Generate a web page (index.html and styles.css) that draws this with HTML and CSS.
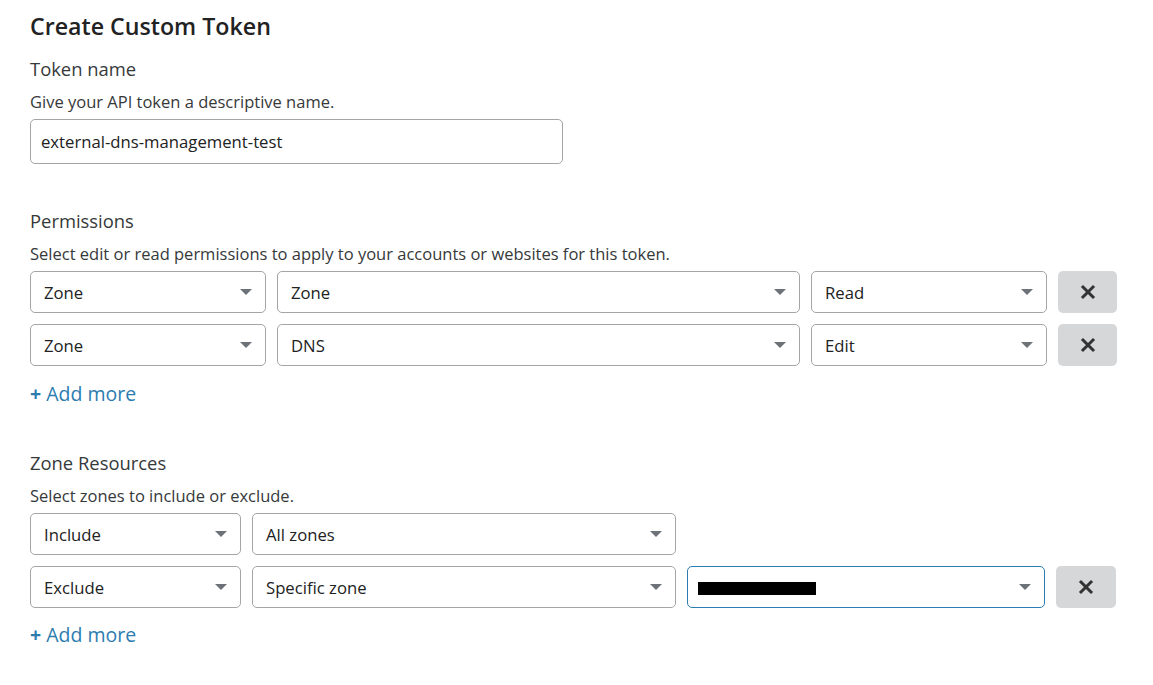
FILE: index.html
```html
<!DOCTYPE html>
<html>
<head>
<meta charset="utf-8">
<link rel="stylesheet" href="styles.css">
</head>
<body>
<div class="page">
  <h1 class="title">Create Custom Token</h1>

  <section class="sec sec-name">
    <div class="label">Token name</div>
    <div class="desc">Give your API token a descriptive name.</div>
    <div class="input">external-dns-management-test</div>
  </section>

  <section class="sec sec-perm">
    <div class="label">Permissions</div>
    <div class="desc">Select edit or read permissions to apply to your accounts or websites for this token.</div>
    <div class="rows">
      <div class="row perm-row">
        <div class="select"><span>Zone</span><i class="caret"></i></div>
        <div class="select"><span>Zone</span><i class="caret"></i></div>
        <div class="select"><span>Read</span><i class="caret"></i></div>
        <button class="remove"><svg viewBox="0 0 16 16" width="16" height="16"><path d="M3 3L13 13M13 3L3 13" stroke="#333" stroke-width="3" stroke-linecap="square"/></svg></button>
      </div>
      <div class="row perm-row">
        <div class="select"><span>Zone</span><i class="caret"></i></div>
        <div class="select"><span>DNS</span><i class="caret"></i></div>
        <div class="select"><span>Edit</span><i class="caret"></i></div>
        <button class="remove"><svg viewBox="0 0 16 16" width="16" height="16"><path d="M3 3L13 13M13 3L3 13" stroke="#333" stroke-width="3" stroke-linecap="square"/></svg></button>
      </div>
    </div>
    <a class="add"><span class="plus">+</span>Add more</a>
  </section>

  <section class="sec sec-zone">
    <div class="label">Zone Resources</div>
    <div class="desc">Select zones to include or exclude.</div>
    <div class="rows">
      <div class="row zone-row">
        <div class="select"><span>Include</span><i class="caret"></i></div>
        <div class="select"><span>All zones</span><i class="caret"></i></div>
      </div>
      <div class="row zone-row">
        <div class="select"><span>Exclude</span><i class="caret"></i></div>
        <div class="select"><span>Specific zone</span><i class="caret"></i></div>
        <div class="select focus"><span class="redacted"></span><i class="caret"></i></div>
        <button class="remove"><svg viewBox="0 0 16 16" width="16" height="16"><path d="M3 3L13 13M13 3L3 13" stroke="#333" stroke-width="3" stroke-linecap="square"/></svg></button>
      </div>
    </div>
    <a class="add"><span class="plus">+</span>Add more</a>
  </section>
</div>
</body>
</html>
```

FILE: styles.css
```css
* { box-sizing: border-box; }
html, body { margin: 0; background: #fff; }
body {
  font-family: "Open Sans", "Noto Sans", sans-serif;
  color: #36393a;
}
.page {
  padding: 10px 30px 0 30px;
  display: flex;
  flex-direction: column;
}
.title {
  margin: 0;
  font-size: 23.2px;
  line-height: 32px;
  font-weight: 600;
  color: #222;
}
.sec { display: flex; flex-direction: column; }
.sec-name { margin-top: 15px; }
.sec-perm { margin-top: 45px; }
.sec-zone { margin-top: 44px; }
.label {
  font-size: 18.4px;
  line-height: 24px;
  color: #36393a;
}
.desc {
  margin-top: 10px;
  font-size: 16.5px;
  line-height: 22px;
  color: #36393a;
}
.input {
  margin-top: 6px;
  width: 533px;
  height: 45px;
  border: 1px solid #a3a6a8;
  border-radius: 5px;
  padding: 0 10px;
  display: flex;
  align-items: center;
  font-size: 16.7px;
  color: #222;
}
.rows {
  margin-top: 6px;
  display: flex;
  flex-direction: column;
  gap: 11px;
}
.sec-zone .rows { margin-top: 6px; }
.row {
  display: grid;
  gap: 11px;
  height: 42px;
}
.perm-row { grid-template-columns: 236px 523px 236px 59px; }
.zone-row { grid-template-columns: 211px 424px 358px 60px; }
.select {
  position: relative;
  border: 1px solid #a3a6a8;
  border-radius: 5px;
  display: flex;
  align-items: center;
  padding: 0 13px;
  font-size: 16.7px;
  color: #222;
}
.select.focus { border-color: #2c7cb0; }
.caret {
  margin-left: auto;
  width: 0;
  height: 0;
  border-left: 6px solid transparent;
  border-right: 6px solid transparent;
  border-top: 6px solid #6d7278;
}
.redacted {
  display: block;
  width: 118px;
  height: 13px;
  background: #000;
  margin-top: 2px;
  margin-left: -3px;
}
.remove {
  border: 0;
  background: #d6d7d9;
  border-radius: 5px;
  display: flex;
  align-items: center;
  justify-content: center;
  padding: 0;
}
.add {
  margin-top: 15px;
  font-size: 19.5px;
  line-height: 26px;
  color: #2c7cb0;
  cursor: pointer;
  display: flex;
  align-items: center;
}
.sec-zone .add { margin-top: 14px; }
.plus {
  font-weight: 700;
  margin-right: 5px;
}
```
